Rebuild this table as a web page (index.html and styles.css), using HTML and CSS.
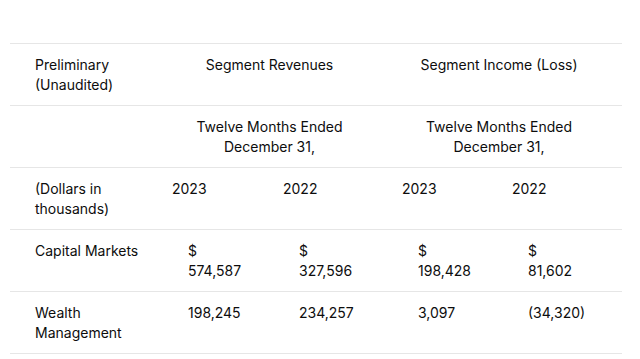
FILE: index.html
```html
<!DOCTYPE html>
<html>
<head>
<meta charset="utf-8">
<link rel="stylesheet" href="styles.css">
</head>
<body>
<div class="wrap">
<table class="seg">
  <colgroup>
    <col class="c1"><col class="c2"><col class="c3"><col class="c4"><col class="c5">
  </colgroup>
  <tr>
    <td class="label">Preliminary<br>(Unaudited)</td>
    <td colspan="2" class="span span-a">Segment Revenues</td>
    <td colspan="2" class="span span-b">Segment Income (Loss)</td>
  </tr>
  <tr>
    <td class="label"></td>
    <td colspan="2" class="span span-a">Twelve Months Ended<br>December 31,</td>
    <td colspan="2" class="span span-b">Twelve Months Ended<br>December 31,</td>
  </tr>
  <tr>
    <td class="label">(Dollars in<br>thousands)</td>
    <td class="year">2023</td>
    <td class="year">2022</td>
    <td class="year">2023</td>
    <td class="year">2022</td>
  </tr>
  <tr>
    <td class="label">Capital Markets</td>
    <td class="val">$<br>574,587</td>
    <td class="val">$<br>327,596</td>
    <td class="val">$<br>198,428</td>
    <td class="val">$<br>81,602</td>
  </tr>
  <tr>
    <td class="label">Wealth<br>Management</td>
    <td class="val">198,245</td>
    <td class="val">234,257</td>
    <td class="val">3,097</td>
    <td class="val">(34,320)</td>
  </tr>
</table>
</div>
</body>
</html>
```
FILE: styles.css
```css
html, body {
  margin: 0;
  padding: 0;
  background: #ffffff;
}
.wrap {
  padding: 43px 18px 0 10px;
}
.seg {
  border-collapse: collapse;
  table-layout: fixed;
  width: 612px;
  font-family: Inter, "Liberation Sans", sans-serif;
  font-size: 14px;
  line-height: 20px;
  color: #0d0d0d;
}
.c1 { width: 161px; }
.c2 { width: 111px; }
.c3 { width: 119px; }
.c4 { width: 110px; }
.c5 { width: 111px; }
.seg td {
  border-top: 1px solid #e6e6e6;
  border-bottom: 1px solid #e6e6e6;
  padding: 11px 0 10px 0;
  height: 40px;
  vertical-align: top;
  text-align: left;
}
.seg td.label { padding-left: 25px; }
.seg td.span { text-align: center; }
.seg td.span-a { padding-right: 33px; }
.seg td.span-b { padding-right: 25px; }
.seg td.year { padding-left: 1px; }
.seg td.val { padding-left: 17px; }
```
